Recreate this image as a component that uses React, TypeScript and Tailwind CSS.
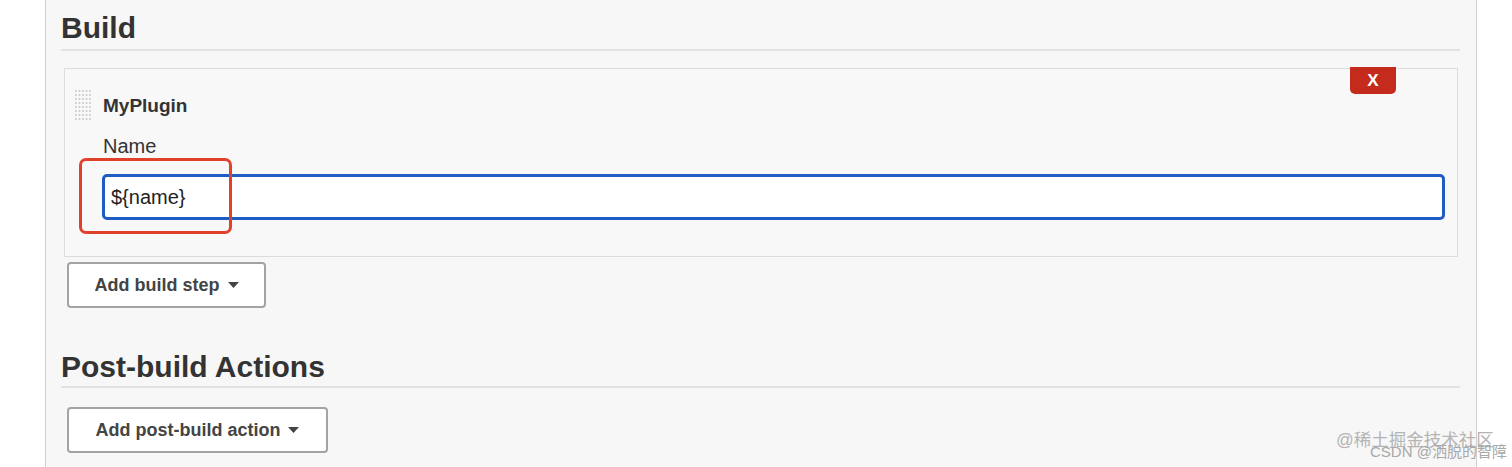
import { useState } from "react";

const font = { fontFamily: '"Helvetica Neue", "Liberation Sans", Arial, "Noto Sans CJK SC", sans-serif' };

const DragHandle = () => (
  <svg width="18" height="32" viewBox="0 0 18 32" className="block">
    {Array.from({ length: 8 }).map((_, r) =>
      Array.from({ length: 5 }).map((_, c) => (
        <circle key={`${r}-${c}`} cx={2 + c * 3.5} cy={2 + r * 4} r="1" fill="#c8c8c8" />
      ))
    )}
  </svg>
);

const Caret = () => (
  <svg width="11" height="6" viewBox="0 0 11 6" className="ml-2">
    <path d="M0 0h11L5.5 6z" fill="#444" />
  </svg>
);

const DropButton = ({ label, width }: { label: string; width: string }) => (
  <button
    className={`flex h-[46px] ${width} items-center justify-center rounded-[4px] border-2 border-[#a3a3a3] bg-white text-[18px] font-bold text-[#444]`}
  >
    {label}
    <Caret />
  </button>
);

export default function App() {
  const [name, setName] = useState("${name}");

  return (
    <div className="relative flex h-[467px] w-[1512px] overflow-hidden bg-white" style={font}>
      <div className="w-[45px] shrink-0 bg-white" />
      <div className="flex w-[1432px] shrink-0 flex-col border-x border-[#cfcfcf] bg-[#f7f7f7] pl-[15px] pr-[16px]">
        {/* Build */}
        <h2 className="mt-[8px] h-[43px] border-b-2 border-[#e2e2e2] text-[30px] font-bold leading-[40px] text-[#333]">
          Build
        </h2>
        <div className="relative ml-[3px] mt-[17px] h-[189px] w-[1394px] border border-[#dcdcdc] bg-[#f8f8f8]">
          <button className="absolute right-[61px] top-[-2px] flex h-[27px] w-[46px] items-center justify-center rounded-b-[5px] bg-[#c42b1c] text-[17px] font-bold text-white">
            X
          </button>
          <div className="flex items-start gap-[11px] pl-[9px] pt-[20px]">
            <DragHandle />
            <div className="flex flex-col">
              <div className="mt-[5px] text-[19px] font-bold leading-[24px] text-[#333]">MyPlugin</div>
              <div className="mt-[16px] text-[20px] font-medium leading-[24px] text-[#333]">Name</div>
            </div>
          </div>
          <div className="pl-[37px] pr-[12px] pt-[16px]">
            <input
              value={name}
              onChange={(e) => setName(e.target.value)}
              className="h-[46px] w-[1343px] rounded-[5px] border-[3px] border-[#1f5cc4] bg-white px-[6px] text-[20px] text-[#222] outline-none"
            />
          </div>
        </div>
        <div className="ml-[6px] mt-[5px]">
          <DropButton label="Add build step" width="w-[199px]" />
        </div>

        {/* Post-build */}
        <h2 className="mt-[42px] h-[38px] border-b-2 border-[#e2e2e2] text-[30px] font-bold leading-[34px] text-[#333]">
          Post-build Actions
        </h2>
        <div className="ml-[6px] mt-[19px]">
          <DropButton label="Add post-build action" width="w-[261px]" />
        </div>
      </div>

      {/* annotation box */}
      <div className="absolute left-[79px] top-[158px] h-[76px] w-[153px] rounded-[7px] border-[3px] border-[#e0412a]" />

      {/* watermarks */}
      <div className="absolute left-[1336px] top-[429px] text-[17.5px] leading-[22px] text-[#b4b4b4]">@稀土掘金技术社区</div>
      <div className="absolute left-[1370px] top-[443px] text-[15px] leading-[18px] text-[#a8a8a8]">CSDN @洒脱的智障</div>
    </div>
  );
}
